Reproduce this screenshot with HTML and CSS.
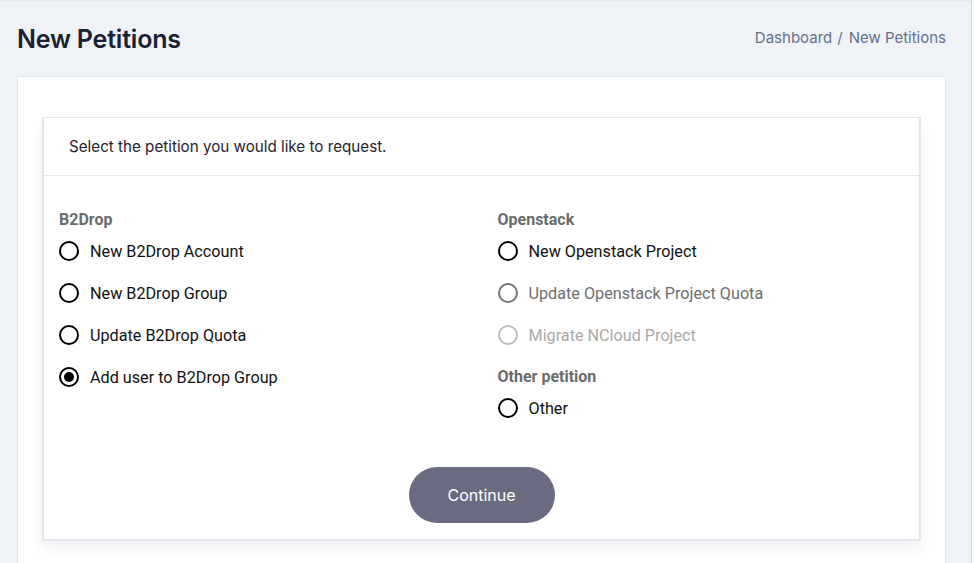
FILE: index.html
```html
<!DOCTYPE html>
<html lang="en">
<head>
<meta charset="utf-8">
<title>New Petitions</title>
<link rel="stylesheet" href="styles.css">
</head>
<body>
<div class="app">
  <main class="main">
    <header class="page-head">
      <h1 class="page-title">New Petitions</h1>
      <nav class="crumbs"><span>Dashboard</span><span class="sep">/</span><span>New Petitions</span></nav>
    </header>
    <section class="card">
      <div class="panel">
        <div class="panel-head">Select the petition you would like to request.</div>
        <div class="panel-body">
          <div class="cols">
            <div class="col">
              <div class="group-label">B2Drop</div>
              <label class="opt"><span class="radio"></span><span>New B2Drop Account</span></label>
              <label class="opt"><span class="radio"></span><span>New B2Drop Group</span></label>
              <label class="opt"><span class="radio"></span><span>Update B2Drop Quota</span></label>
              <label class="opt"><span class="radio checked"></span><span>Add user to B2Drop Group</span></label>
            </div>
            <div class="col">
              <div class="group-label">Openstack</div>
              <label class="opt"><span class="radio"></span><span>New Openstack Project</span></label>
              <label class="opt muted"><span class="radio"></span><span>Update Openstack Project Quota</span></label>
              <label class="opt faint"><span class="radio"></span><span>Migrate NCloud Project</span></label>
              <div class="group-label spaced">Other petition</div>
              <label class="opt"><span class="radio"></span><span>Other</span></label>
            </div>
          </div>
          <div class="actions">
            <button class="btn">Continue</button>
          </div>
        </div>
      </div>
    </section>
  </main>
</div>
</body>
</html>
```
FILE: styles.css
```css
* { box-sizing: border-box; }
html, body { margin: 0; padding: 0; }
body {
  background: #ffffff;
  font-family: "Inter", "Liberation Sans", sans-serif;
  height: 563px;
  overflow: hidden;
}
.app {
  margin-right: 2px;
  border-right: 1px solid #f8d3a6;
  background: #eff3f8;
  min-height: 563px;
  box-shadow: inset 0 2px 2px -1px rgba(0,0,0,0.06);
}
.main {
  padding: 0 25px 0 17px;
}
.page-head {
  display: flex;
  justify-content: space-between;
  align-items: center;
  height: 76px;
  padding-bottom: 1px;
}
.page-title {
  margin: 0;
  font-size: 25px;
  font-weight: 600;
  color: #1b2132;
  letter-spacing: -0.2px;
  position: relative;
  top: 1px;
}
.crumbs {
  font-size: 15px;
  color: #66708a;
  display: flex;
  align-items: center;
}
.crumbs .sep { margin: 0 6px 0 5px; }
.card {
  background: #ffffff;
  border: 1px solid #e1e7f0;
  padding: 40px 24px 40px 24px;
  min-height: 500px;
}
.panel {
  border: 2px solid #e1e6ef;
  border-top-width: 1.5px;
  background: #fff;
  box-shadow: 0 8px 14px rgba(30, 40, 60, 0.06);
}
.panel-head {
  height: 58px;
  display: flex;
  align-items: center;
  padding-left: 25px;
  font-size: 15.2px;
  color: #1f2330;
  border-bottom: 1px solid #e1e6ef;
}
.panel-body {
  padding: 34px 0 16px 0;
}
.cols {
  display: grid;
  grid-template-columns: 1fr 1fr;
}
.col {
  padding-left: 15px;
  font-family: "Roboto", "Liberation Sans", sans-serif;
}
.col + .col { padding-left: 16px; }
.group-label {
  font-weight: 700;
  font-size: 16px;
  color: #6b6b6b;
  height: 20px;
  line-height: 20px;
  margin-bottom: 0;
}
.group-label.spaced { margin-top: 11px; margin-bottom: 0; }
.opt {
  display: flex;
  align-items: center;
  gap: 11px;
  height: 42px;
  font-size: 16.2px;
  color: #111;
}
.radio {
  width: 20px;
  height: 20px;
  border: 2px solid #000;
  border-radius: 50%;
  display: flex;
  align-items: center;
  justify-content: center;
  flex: none;
}
.radio.checked::after {
  content: "";
  width: 10px;
  height: 10px;
  border-radius: 50%;
  background: #000;
}
.opt.muted { color: #6e6e6e; }
.opt.muted .radio { border-color: #757575; }
.opt.faint { color: #a9a9a9; }
.opt.faint .radio { border-color: #bdbdbd; }
.actions {
  display: flex;
  justify-content: center;
  margin-top: 38px;
}
.btn {
  width: 146px;
  height: 56px;
  border-radius: 28px;
  border: none;
  background: #6a6b80;
  color: #fff;
  font-family: "Inter", "Liberation Sans", sans-serif;
  font-size: 16px;
}
```
